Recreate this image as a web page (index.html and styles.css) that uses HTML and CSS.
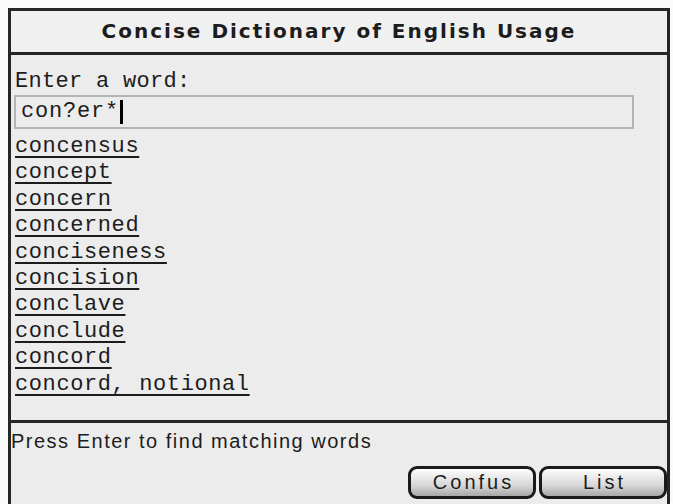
FILE: index.html
```html
<!DOCTYPE html>
<html lang="en">
<head>
    <meta charset="UTF-8">
    <title>Concise Dictionary of English Usage</title>
    <link rel="stylesheet" href="styles.css">
</head>
<body>
    <div class="frame">
        <div class="header">Concise Dictionary of English Usage</div>
        <div class="main">
            <div class="prompt">Enter a word:</div>
            <div class="entry">con?er*<span class="caret"></span></div>
            <ul class="words">
                <li><a href="#">concensus</a></li>
                <li><a href="#">concept</a></li>
                <li><a href="#">concern</a></li>
                <li><a href="#">concerned</a></li>
                <li><a href="#">conciseness</a></li>
                <li><a href="#">concision</a></li>
                <li><a href="#">conclave</a></li>
                <li><a href="#">conclude</a></li>
                <li><a href="#">concord</a></li>
                <li><a href="#">concord, notional</a></li>
            </ul>
        </div>
        <div class="footer">
            <div class="status">Press Enter to find matching words</div>
            <div class="buttons">
                <button class="btn">Confus</button>
                <button class="btn">List</button>
            </div>
        </div>
    </div>
</body>
</html>
```

FILE: styles.css
```css
body {
    margin: 0;
    background-color: #fafafa;
    color: #1c1c1c;
    font-family: "Liberation Mono", monospace;
}
.frame {
    margin: 8px 0 0 8px;
    width: 656px;
    height: 496px;
    border: 3px solid #262626;
    border-bottom: none;
    background-color: #ececec;
    display: flex;
    flex-direction: column;
}
.header {
    height: 39px;
    border-bottom: 3px solid #262626;
    background-color: #f0f0f0;
    display: flex;
    align-items: center;
    justify-content: center;
    padding-bottom: 2px;
    font-family: "DejaVu Sans", sans-serif;
    font-weight: bold;
    font-size: 20px;
    letter-spacing: 2px;
}
.main {
    flex-grow: 1;
    padding: 14px 0 0 3px;
}
.prompt {
    font-size: 22px;
    line-height: 26px;
    margin-left: 1px;
    letter-spacing: 0.3px;
}
.entry {
    width: 611px;
    height: 30px;
    border: 2px solid #b4b4b4;
    margin-top: 0;
    padding-left: 5px;
    font-size: 22px;
    line-height: 30px;
    letter-spacing: 0.8px;
    display: flex;
    align-items: center;
}
.caret {
    display: inline-block;
    width: 3px;
    height: 24px;
    background-color: #000;
    margin-left: 1px;
}
.words {
    list-style: none;
    margin: 5px 0 0 1px;
    padding: 0;
}
.words li {
    font-size: 22px;
    line-height: 26.4px;
    letter-spacing: 0.6px;
}
.words a {
    color: #1c1c1c;
    text-decoration: underline;
    text-decoration-thickness: 2px;
    text-underline-offset: 4px;
}
.footer {
    border-top: 3px solid #262626;
    height: 78px;
    padding: 6px 0 0 0;
}
.status {
    font-family: "Liberation Sans", sans-serif;
    font-size: 20px;
    letter-spacing: 1.5px;
    line-height: 24px;
}
.buttons {
    display: flex;
    justify-content: flex-end;
    margin-top: 13px;
    gap: 3px;
}
.btn {
    width: 128px;
    height: 33px;
    border: 3px solid #1a1a1a;
    border-radius: 9px;
    background: linear-gradient(#fdfdfd, #d8d8d8 60%, #a8a8a8);
    font-family: "Liberation Sans", sans-serif;
    font-size: 20px;
    letter-spacing: 3px;
    color: #1c1c1c;
    padding: 0 0 0 3px;
}
```
